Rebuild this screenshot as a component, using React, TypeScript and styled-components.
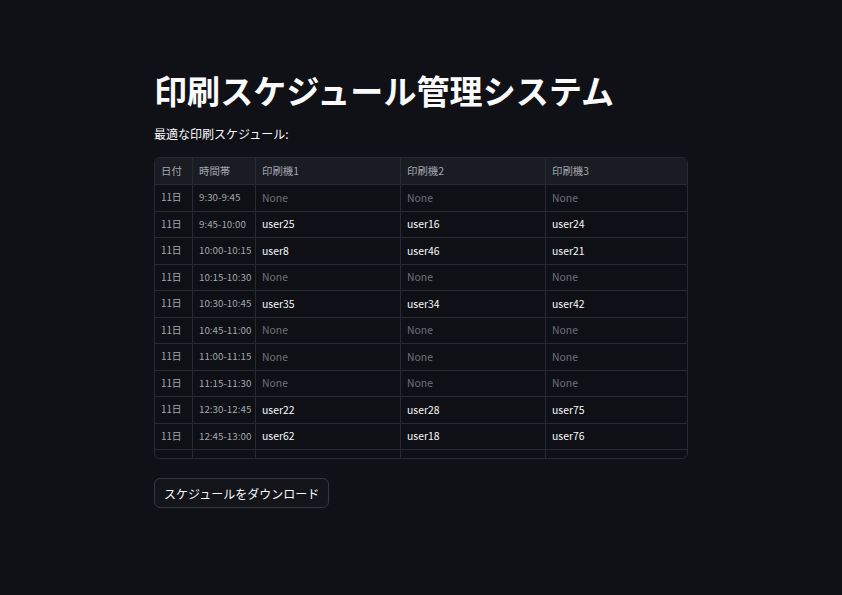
import React from "react";
import styled, { createGlobalStyle } from "styled-components";

const Global = createGlobalStyle`
  html, body { margin: 0; padding: 0; background: #0f1116; }
  body { font-family: "Noto Sans CJK JP", "Noto Sans", sans-serif; color: #fafafa; }
`;

const Main = styled.main`
  width: 534px;
  margin: 0 auto;
  padding-top: 70px;
  display: flex;
  flex-direction: column;
  align-items: flex-start;
`;

const Title = styled.h1`
  margin: 0;
  font-size: 33px;
  line-height: 40px;
  font-weight: 700;
  letter-spacing: 0.1px;
  color: #fafafa;
  white-space: nowrap;
`;

const Caption = styled.p`
  margin: 15px 0 0;
  font-size: 12px;
  line-height: 18px;
  color: #fafafa;
`;

const TableFrame = styled.div`
  margin-top: 14px;
  width: 100%;
  height: 302px;
  box-sizing: border-box;
  border: 1px solid #262a33;
  border-radius: 6px;
  overflow: hidden;
  background: #0e1015;
`;

const Row = styled.div<{ $head?: boolean }>`
  display: grid;
  grid-template-columns: 38px 63px 145px 145px 1fr;
  height: ${(p) => (p.$head ? "27px" : "26.5px")};
  background: ${(p) => (p.$head ? "#1a1c24" : "transparent")};
  border-bottom: 1px solid #262a33;
  box-sizing: border-box;
`;

const Cell = styled.div<{ $tone: "head" | "index" | "none" | "value" }>`
  display: flex;
  align-items: center;
  padding: 0 6px 1px;
  font-size: ${(p) => (p.$tone === "index" ? "9.8px" : "10.4px")};
  white-space: nowrap;
  overflow: hidden;
  border-right: 1px solid #262a33;
  color: ${(p) =>
    p.$tone === "value"
      ? "#fafafa"
      : p.$tone === "none"
      ? "#6e7079"
      : "#a3a6ae"};
  &:last-child { border-right: none; }
`;

const Button = styled.button`
  margin-top: 19px;
  height: 30px;
  padding: 0 9px;
  background: #13151b;
  border: 1px solid #353842;
  border-radius: 6px;
  color: #fafafa;
  font-family: "Noto Sans CJK JP", "Noto Sans", sans-serif;
  font-size: 12px;
  cursor: pointer;
`;

type R = [string, string, string, string, string];
const rows: R[] = [
  ["11日", "9:30-9:45", "None", "None", "None"],
  ["11日", "9:45-10:00", "user25", "user16", "user24"],
  ["11日", "10:00-10:15", "user8", "user46", "user21"],
  ["11日", "10:15-10:30", "None", "None", "None"],
  ["11日", "10:30-10:45", "user35", "user34", "user42"],
  ["11日", "10:45-11:00", "None", "None", "None"],
  ["11日", "11:00-11:15", "None", "None", "None"],
  ["11日", "11:15-11:30", "None", "None", "None"],
  ["11日", "12:30-12:45", "user22", "user28", "user75"],
  ["11日", "12:45-13:00", "user62", "user18", "user76"],
  ["11日", "", "", "", ""],
];

export default function App() {
  return (
    <>
      <Global />
      <Main>
        <Title>印刷スケジュール管理システム</Title>
        <Caption>最適な印刷スケジュール:</Caption>
        <TableFrame>
          <Row $head>
            {["日付", "時間帯", "印刷機1", "印刷機2", "印刷機3"].map((h) => (
              <Cell key={h} $tone="head">{h}</Cell>
            ))}
          </Row>
          {rows.map((r, i) => (
            <Row key={i}>
              <Cell $tone="index">{r[0]}</Cell>
              <Cell $tone="index">{r[1]}</Cell>
              {r.slice(2).map((v, j) => (
                <Cell key={j} $tone={v === "None" ? "none" : "value"}>{v}</Cell>
              ))}
            </Row>
          ))}
        </TableFrame>
        <Button>スケジュールをダウンロード</Button>
      </Main>
    </>
  );
}
